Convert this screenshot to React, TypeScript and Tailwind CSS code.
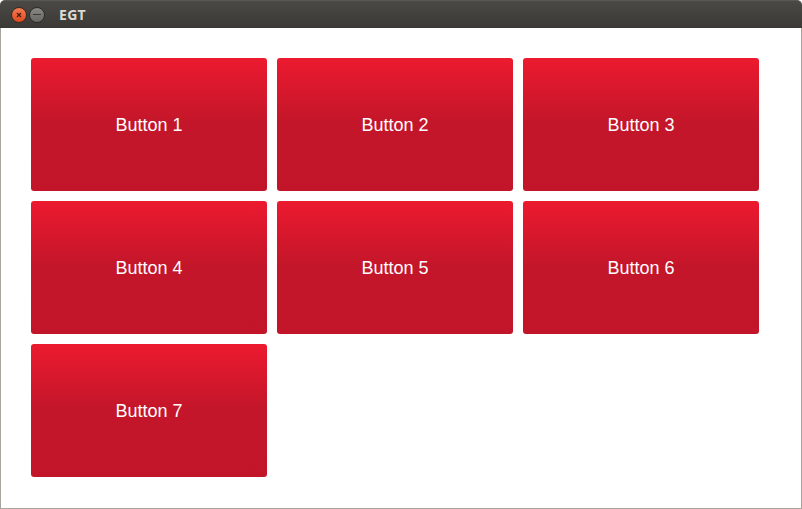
import React from "react";

const labels = ["Button 1", "Button 2", "Button 3", "Button 4", "Button 5", "Button 6", "Button 7"];

export default function App() {
  return (
    <div className="w-[802px] h-[509px] flex flex-col bg-white" style={{ fontFamily: '"Liberation Sans", Arial, sans-serif' }}>
      <div className="h-[28px] flex items-center rounded-t-[5px] border-t border-[#5a5852] bg-gradient-to-b from-[#4a4945] to-[#3a3935] px-[11px] gap-[2px]">
        <div className="w-[16px] h-[16px] rounded-full bg-gradient-to-b from-[#f47a4f] to-[#de4a1e] border border-[#3a2a20] flex items-center justify-center">
          <svg width="8" height="8" viewBox="0 0 8 8"><path d="M2 2 L6 6 M6 2 L2 6" stroke="#4a1a0c" strokeWidth="1.3" /></svg>
        </div>
        <div className="w-[16px] h-[16px] rounded-full bg-gradient-to-b from-[#8a8882] to-[#6a6863] border border-[#2e2d2a] flex items-center justify-center">
          <div className="w-[8px] h-[1.5px] bg-[#3a3935]" />
        </div>
        <div className="ml-[12px] text-[14px] font-bold text-[#dfdbd2] tracking-[0.3px]" style={{ fontFamily: '"Open Sans", sans-serif' }}>EGT</div>
      </div>
      <div className="flex-1 border-x border-b border-[#a9a59e] pl-[30px] pt-[30px]">
        <div className="grid grid-cols-[236px_236px_236px] gap-[10px] auto-rows-[133px]">
          {labels.map((l) => (
            <div
              key={l}
              className="rounded-[3px] flex items-center justify-center pt-[2px] text-white text-[18px] bg-[linear-gradient(to_bottom,#ec1a2f_0%,#c4162a_48%,#c3152a_100%)]"
            >
              {l}
            </div>
          ))}
        </div>
      </div>
    </div>
  );
}
